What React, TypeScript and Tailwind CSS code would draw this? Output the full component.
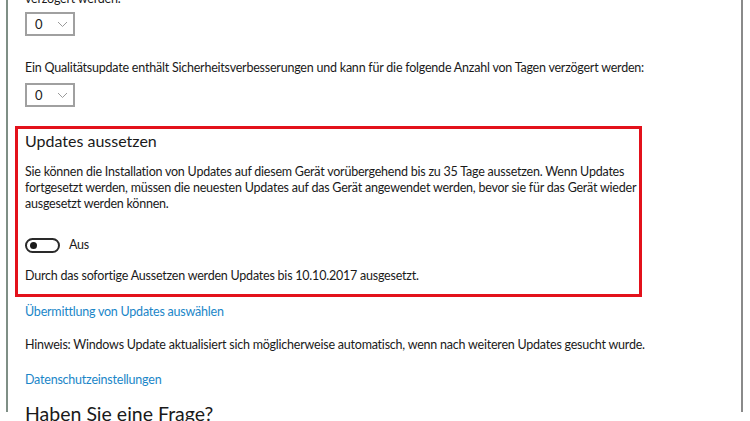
import React from "react";

function Dropdown() {
  return (
    <div className="flex h-[24px] w-[50px] items-center border-2 border-[#a0a0a0] bg-white pl-[8px]">
      <span className="text-[13px] leading-none text-[#1a1a1a]">0</span>
      <svg className="ml-[14px]" width="11" height="7" viewBox="0 0 11 7" fill="none">
        <path d="M1 1 L5.5 5.5 L10 1" stroke="#9a9a9a" strokeWidth="1" />
      </svg>
    </div>
  );
}

export default function App() {
  return (
    <div
      className="h-[421px] w-[750px] overflow-hidden whitespace-nowrap bg-white text-[#1a1a1a]"
      style={{ fontFamily: 'Lato, "Open Sans", sans-serif' }}
    >
      <div className="ml-[6px] h-[421px] w-[737px] border-l-2 border-r-2 border-l-[#7f8f86] border-r-[#8a8a8a] pl-[17px]">
        <div className="mt-[-9px] text-[12.5px] leading-[16px] tracking-[-0.22px]">verzögert werden.</div>
        <div className="mt-[5px]">
          <Dropdown />
        </div>
        <div className="mt-[24px] text-[12.5px] leading-[16px] tracking-[-0.22px]">
          Ein Qualitätsupdate enthält Sicherheitsverbesserungen und kann für die folgende Anzahl von Tagen verzögert werden:
        </div>
        <div className="mt-[7px]">
          <Dropdown />
        </div>

        <div className="ml-[-10px] mt-[19px] h-[171px] w-[627px] border-[3px] border-[#e3111b] pl-[7px] pt-[1px]">
          <div className="text-[16px] leading-[22px]">Updates aussetzen</div>
          <div className="mt-[12px] text-[12.5px] leading-[16px] tracking-[-0.22px]">
            Sie können die Installation von Updates auf diesem Gerät vorübergehend bis zu 35 Tage aussetzen. Wenn Updates
            <br />
            fortgesetzt werden, müssen die neuesten Updates auf das Gerät angewendet werden, bevor sie für das Gerät wieder
            <br />
            ausgesetzt werden können.
          </div>
          <div className="mt-[25px] flex items-center">
            <div className="flex h-[15px] w-[35px] items-center rounded-full border-2 border-[#2a2a2a] pl-[3px]">
              <div className="h-[7px] w-[7px] rounded-full bg-[#1a1a1a]" />
            </div>
            <span className="ml-[9px] text-[12.5px] leading-[16px] tracking-[-0.22px]">Aus</span>
          </div>
          <div className="mt-[15px] text-[12.5px] leading-[16px] tracking-[-0.22px]">
            Durch das sofortige Aussetzen werden Updates bis 10.10.2017 ausgesetzt.
          </div>
        </div>

        <div className="mt-[7px] text-[12.5px] leading-[16px] tracking-[-0.22px] text-[#1a86c8]">
          Übermittlung von Updates auswählen
        </div>
        <div className="mt-[17px] text-[12.5px] leading-[16px] tracking-[-0.22px]">
          Hinweis: Windows Update aktualisiert sich möglicherweise automatisch, wenn nach weiteren Updates gesucht wurde.
        </div>
        <div className="mt-[19px] text-[12.5px] leading-[16px] tracking-[-0.22px] text-[#1a86c8]">
          Datenschutzeinstellungen
        </div>
        <div className="mt-[13px] text-[19.5px] leading-[26px]">Haben Sie eine Frage?</div>
      </div>
    </div>
  );
}
